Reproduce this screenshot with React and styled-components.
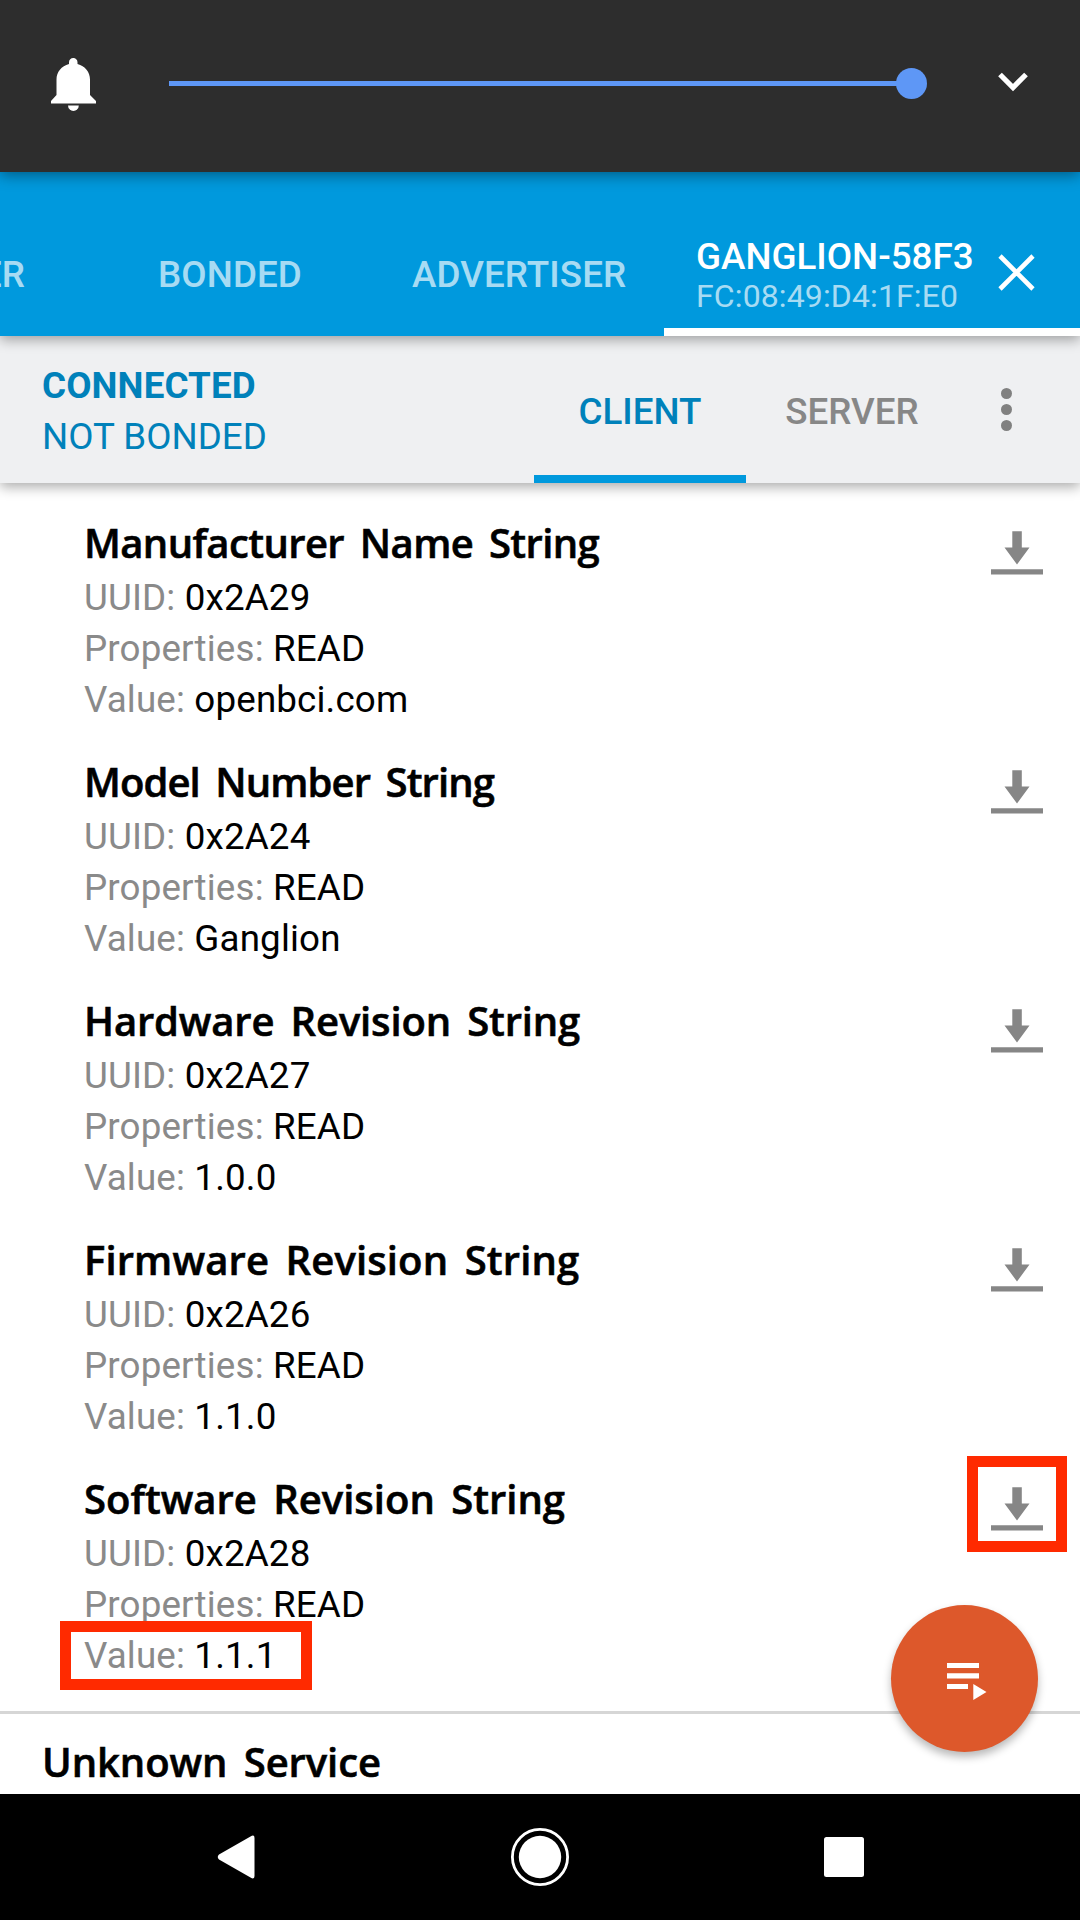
import React from "react";
import styled, { createGlobalStyle } from "styled-components";

const GlobalStyle = createGlobalStyle`
  * { box-sizing: border-box; }
  body { margin: 0; background: #fff; }
`;

const Screen = styled.div`
  position: relative;
  display: flex;
  flex-direction: column;
  width: 1080px;
  height: 1920px;
  overflow: hidden;
  background: #fff;
  color: #000;
  font-family: Roboto, "Liberation Sans", sans-serif;
  font-size: 36.75px;
  white-space: nowrap;
`;

const VolumePanel = styled.header`
  z-index: 3;
  flex: none;
  display: flex;
  align-items: center;
  height: 172px;
  padding: 0 52px 5px 51px;
  background: #2d2d2d;
  box-shadow: 0 3px 14px rgba(0, 0, 0, 0.42);
`;

const BellIcon = styled.svg`
  width: 45px;
  height: 53px;
  margin-top: 2px;
  fill: #fff;
`;

const Slider = styled.div`
  display: flex;
  align-items: center;
  width: 758px;
  margin-left: 73px;
`;

const Track = styled.div`
  flex: 1;
  height: 5px;
  background: #5e97f6;
`;

const Thumb = styled.div`
  width: 31px;
  height: 31px;
  margin-left: -1px;
  border-radius: 50%;
  background: #5e97f6;
`;

const Chevron = styled.svg`
  width: 30px;
  height: 20px;
  margin: -3px 0 0 70.5px;
  fill: none;
  stroke: #fff;
  stroke-width: 5.2;
`;

const TabBar = styled.nav`
  z-index: 2;
  flex: none;
  display: flex;
  height: 164px;
  background: #0099dd;
  box-shadow: 0 4px 12px rgba(0, 0, 0, 0.33);
`;

const Tab = styled.div`
  width: ${(p) => p.$width}px;
  padding: ${(p) => p.$top}px 0 0 ${(p) => p.$inset || 0}px;
  line-height: 44px;
  font-weight: 500;
  letter-spacing: 0.1px;
  color: rgba(255, 255, 255, 0.67);
`;

const ScannerTab = styled(Tab)`
  display: flex;
  justify-content: flex-end;
  overflow: hidden;
`;

const DeviceTab = styled.div`
  flex: 1;
  display: flex;
  justify-content: space-between;
  padding: 63px 45px 0 32px;
  border-bottom: 8px solid #fff;
`;

const DeviceName = styled.div`
  height: 42px;
  line-height: 44px;
  font-weight: 500;
  color: #fff;
`;

const DeviceAddress = styled.div`
  line-height: 38px;
  font-size: 32px;
  letter-spacing: 0.12px;
  color: rgba(255, 255, 255, 0.67);
`;

const CloseIcon = styled.svg`
  width: 37px;
  height: 37px;
  margin-top: 19px;
  fill: none;
  stroke: #fff;
  stroke-width: 4.6;
`;

const ConnectionBar = styled.section`
  z-index: 1;
  flex: none;
  display: flex;
  height: 147px;
  background: #eff0f2;
  box-shadow: 0 4px 12px rgba(0, 0, 0, 0.33);
`;

const Status = styled.div`
  width: 534px;
  padding: 24px 0 0 42px;
  line-height: 51px;
  color: #0081ba;
`;

const StatusStrong = styled.div`
  font-weight: 700;
  letter-spacing: 0.1px;
`;

const RoleTab = styled.div`
  display: flex;
  justify-content: center;
  width: 212px;
  padding-top: 54px;
  line-height: 44px;
  font-weight: 500;
  color: ${(p) => (p.$active ? "#0081ba" : "#878787")};
  border-bottom: ${(p) => (p.$active ? "8px solid #0099dd" : "0")};
`;

const MenuDots = styled.div`
  display: flex;
  flex-direction: column;
  gap: 5px;
  padding: 52px 0 0 43px;
`;

const Dot = styled.i`
  width: 11px;
  height: 11px;
  border-radius: 50%;
  background: #808080;
`;

const Content = styled.main`
  flex: 1;
  min-height: 0;
  overflow: hidden;
`;

const CharacteristicList = styled.ul`
  display: flex;
  flex-direction: column;
  gap: 31px;
  margin: 0;
  padding: 34px 37px 30px 84px;
  list-style: none;
  border-bottom: 3px solid #d6d6d6;
`;

const Characteristic = styled.li`
  display: flex;
  justify-content: space-between;
  height: 208px;
`;

const Title = styled.h2`
  height: 55px;
  margin: 0;
  font: 600 40px/51px "Open Sans", "Noto Sans", sans-serif;
  letter-spacing: ${(p) => p.$tracking}px;
  word-spacing: 6px;
  -webkit-text-stroke: 0.6px #000;
`;

const ServiceTitle = styled(Title)`
  padding: 22px 0 0 42px;
`;

const Field = styled.div`
  line-height: 51px;
  letter-spacing: 0.15px;
`;

const Label = styled.span`
  color: #8a8a8a;
`;

const ReadIcon = styled.svg`
  width: 52px;
  height: 45px;
  margin: 13px 0 0;
  fill: #868686;
`;

const Highlight = styled.div`
  position: absolute;
  left: ${(p) => p.$x}px;
  top: ${(p) => p.$y}px;
  width: ${(p) => p.$w}px;
  height: ${(p) => p.$h}px;
  border: 11px solid #ff2a00;
`;

const ActionButton = styled.div`
  position: absolute;
  left: 891px;
  top: 1605px;
  display: flex;
  width: 147px;
  height: 147px;
  padding: 58px 0 0 56px;
  border-radius: 50%;
  background: #dd582b;
  box-shadow: 0 5px 9px rgba(0, 0, 0, 0.28);
`;

const PlaylistIcon = styled.svg`
  width: 40px;
  height: 38px;
  fill: #fff;
`;

const NavBar = styled.footer`
  z-index: 1;
  flex: none;
  display: flex;
  align-items: center;
  justify-content: space-between;
  height: 126px;
  padding: 0 216px 0 217px;
  background: #000;
`;

const NavIcon = styled.svg`
  width: ${(p) => p.$w}px;
  height: 60px;
  fill: #fff;
`;

const characteristics = [
  { name: "Manufacturer Name String", tracking: -0.6, uuid: "0x2A29", value: "openbci.com" },
  { name: "Model Number String", tracking: -0.9, uuid: "0x2A24", value: "Ganglion" },
  { name: "Hardware Revision String", tracking: -0.15, uuid: "0x2A27", value: "1.0.0" },
  { name: "Firmware Revision String", tracking: 0.13, uuid: "0x2A26", value: "1.1.0" },
  { name: "Software Revision String", tracking: 0, uuid: "0x2A28", value: "1.1.1" },
];

export default function App() {
  return (
    <Screen>
      <GlobalStyle />
      <VolumePanel>
        <BellIcon viewBox="0 0 45 53">
          <path d="M22.2 0a4.2 4.2 0 0 1 4.3 4.2V6C34 8 39 14 39 21.500V37l6 6v2.500H0V43l5.500-6V21.500C5.500 14 10.500 8 18 6V4.200A4.200 4.200 0 0 1 22.200 0Z" />
          <path d="M17 47.500h10.800a5.400 5.400 0 0 1-10.800 0Z" />
        </BellIcon>
        <Slider>
          <Track />
          <Thumb />
        </Slider>
        <Chevron viewBox="0 0 30 20">
          <path d="M2 2.500 15 15.500 28 2.500" />
        </Chevron>
      </VolumePanel>

      <TabBar>
        <ScannerTab $width={25} $top={81}>SCANNER</ScannerTab>
        <Tab $width={252} $inset={133} $top={81}>BONDED</Tab>
        <Tab $width={387} $inset={135} $top={81}>ADVERTISER</Tab>
        <DeviceTab>
          <div>
            <DeviceName>GANGLION-58F3</DeviceName>
            <DeviceAddress>FC:08:49:D4:1F:E0</DeviceAddress>
          </div>
          <CloseIcon viewBox="0 0 37 37">
            <path d="M2 2 35 35M35 2 2 35" />
          </CloseIcon>
        </DeviceTab>
      </TabBar>

      <ConnectionBar>
        <Status>
          <StatusStrong>CONNECTED</StatusStrong>
          <div>NOT BONDED</div>
        </Status>
        <RoleTab $active>CLIENT</RoleTab>
        <RoleTab>SERVER</RoleTab>
        <MenuDots>
          <Dot />
          <Dot />
          <Dot />
        </MenuDots>
      </ConnectionBar>

      <Content>
        <CharacteristicList>
          {characteristics.map((c) => (
            <Characteristic key={c.uuid}>
              <div>
                <Title $tracking={c.tracking}>{c.name}</Title>
                <Field><Label>UUID:</Label> {c.uuid}</Field>
                <Field><Label>Properties:</Label> READ</Field>
                <Field><Label>Value:</Label> {c.value}</Field>
              </div>
              <ReadIcon viewBox="0 -0.5 52 45">
                <path d="M21.300 .7h9.500v16.300h7.700L26 34 13.500 17h7.800ZM0 38.800h52v5.200H0Z" />
              </ReadIcon>
            </Characteristic>
          ))}
        </CharacteristicList>
        <ServiceTitle $tracking={-0.07}>Unknown Service</ServiceTitle>
      </Content>

      <NavBar>
        <NavIcon $w={38} viewBox="0 0 38 60">
          <path d="M33.500 9.500Q37.500 7 37.500 11v38q0 4-4 1.500L2 32.500Q-.5 30 2 27.500Z" />
        </NavIcon>
        <NavIcon $w={60} viewBox="0 0 60 60">
          <circle cx="30" cy="30" r="21.200" />
          <circle cx="30" cy="30" r="27.600" fill="none" stroke="#fff" strokeWidth="2.800" />
        </NavIcon>
        <NavIcon $w={40} viewBox="0 0 40 60">
          <rect y="10" width="40" height="40" rx="2.500" />
        </NavIcon>
      </NavBar>

      <Highlight $x={967} $y={1456} $w={100} $h={96} />
      <Highlight $x={60} $y={1621} $w={252} $h={69} />
      <ActionButton>
        <PlaylistIcon viewBox="0 0 40 38">
          <path d="M0 0h32v5H0ZM0 10.300h32v5.200H0ZM0 21h21v5H0ZM26.300 21v16L39.500 29Z" />
        </PlaylistIcon>
      </ActionButton>
    </Screen>
  );
}
